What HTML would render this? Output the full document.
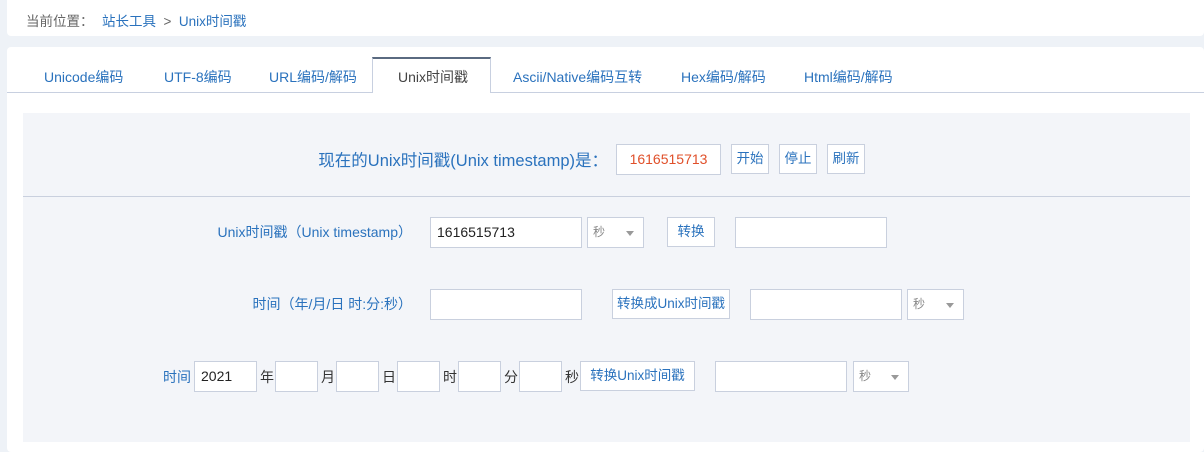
<!DOCTYPE html><html><head><meta charset="utf-8"><style>
*{margin:0;padding:0;box-sizing:border-box}
body{width:1204px;height:452px;background:#eef2f7;font-family:"Liberation Sans","Noto Sans CJK SC",sans-serif;font-size:13px;color:#333;position:relative;overflow:hidden}
.a{position:absolute}
.bar{left:7px;top:0;width:1197px;height:36px;background:#fff;border-radius:0 0 4px 4px}
.card{left:7px;top:47px;width:1197px;height:405px;background:#fff;border-radius:4px}
.blue{color:#2a72bd}
.in{position:absolute;background:#fff;border:1px solid #c9d0de;height:31px;line-height:29px;padding-left:6px;font-size:14px;color:#222}
.btn{position:absolute;background:#fff;border:1px solid #c9d0de;height:30px;line-height:28px;text-align:center;color:#2a72bd;font-size:13.5px;white-space:nowrap}
.sel{position:absolute;background:#fff;border:1px solid #c9d0de;height:31px;line-height:29px;padding-left:5px;color:#888;font-size:12px}
.sel:after{content:"";position:absolute;right:9px;top:13px;border:4px solid transparent;border-top:5px solid #999}
.lab{position:absolute;color:#2a72bd;font-size:14px;line-height:16px;white-space:nowrap}
.tab{position:absolute;top:67px;color:#2a72bd;font-size:14px}
</style></head><body>
<div class="a bar"></div>
<div class="a" style="left:26px;top:10px;color:#666;font-size:13.5px">当前位置：</div>
<div class="a blue" style="left:102px;top:10px;font-size:13.5px">站长工具 <span style="color:#666">&nbsp;&gt;&nbsp;</span> Unix时间戳</div>
<div class="a card"></div>
<div class="a" style="left:7px;top:92px;width:1197px;height:1px;background:#c8d0e0"></div>
<div class="a" style="left:372px;top:57px;width:119px;height:36px;background:#fff;border:1px solid #c8d0e0;border-top:2px solid #5a6a80;border-bottom:none"></div>
<div class="tab" style="left:44px">Unicode编码</div>
<div class="tab" style="left:164px">UTF-8编码</div>
<div class="tab" style="left:269px">URL编码/解码</div>
<div class="tab" style="left:398px;color:#444">Unix时间戳</div>
<div class="tab" style="left:513px">Ascii/Native编码互转</div>
<div class="tab" style="left:681px">Hex编码/解码</div>
<div class="tab" style="left:804px">Html编码/解码</div>
<div class="a" style="left:23px;top:113px;width:1167px;height:329px;background:#f3f5f9"></div>
<div class="a" style="left:23px;top:196px;width:1167px;height:1px;background:#c9d0de"></div>
<div class="a blue" style="right:596px;top:147px;font-size:16.5px;white-space:nowrap">现在的Unix时间戳(Unix timestamp)是：</div>
<div class="in" style="left:616px;top:144px;width:105px;color:#e0502a;text-align:center;padding:0">1616515713</div>
<div class="btn" style="left:731px;top:144px;width:38px">开始</div>
<div class="btn" style="left:779px;top:144px;width:38px">停止</div>
<div class="btn" style="left:827px;top:144px;width:38px">刷新</div>

<div class="lab" style="right:792px;top:224px">Unix时间戳（Unix timestamp）</div>
<div class="in" style="left:430px;top:217px;width:152px">1616515713</div>
<div class="sel" style="left:587px;top:217px;width:57px">秒</div>
<div class="btn" style="left:667px;top:217px;width:48px">转换</div>
<div class="in" style="left:735px;top:217px;width:152px"></div>

<div class="lab" style="right:792px;top:296px">时间（年/月/日 时:分:秒）</div>
<div class="in" style="left:430px;top:289px;width:152px"></div>
<div class="btn" style="left:612px;top:289px;width:118px">转换成Unix时间戳</div>
<div class="in" style="left:750px;top:289px;width:152px"></div>
<div class="sel" style="left:907px;top:289px;width:57px">秒</div>

<div class="lab" style="left:163px;top:369px">时间</div>
<div class="in" style="left:194px;top:361px;width:63px">2021</div>
<div class="lab" style="left:260px;top:369px;color:#333">年</div>
<div class="in" style="left:275px;top:361px;width:43px"></div>
<div class="lab" style="left:321px;top:369px;color:#333">月</div>
<div class="in" style="left:336px;top:361px;width:43px"></div>
<div class="lab" style="left:382px;top:369px;color:#333">日</div>
<div class="in" style="left:397px;top:361px;width:43px"></div>
<div class="lab" style="left:443px;top:369px;color:#333">时</div>
<div class="in" style="left:458px;top:361px;width:43px"></div>
<div class="lab" style="left:504px;top:369px;color:#333">分</div>
<div class="in" style="left:519px;top:361px;width:43px"></div>
<div class="lab" style="left:565px;top:369px;color:#333">秒</div>
<div class="btn" style="left:580px;top:361px;width:115px">转换Unix时间戳</div>
<div class="in" style="left:715px;top:361px;width:132px"></div>
<div class="sel" style="left:853px;top:361px;width:56px">秒</div>
</body></html>
